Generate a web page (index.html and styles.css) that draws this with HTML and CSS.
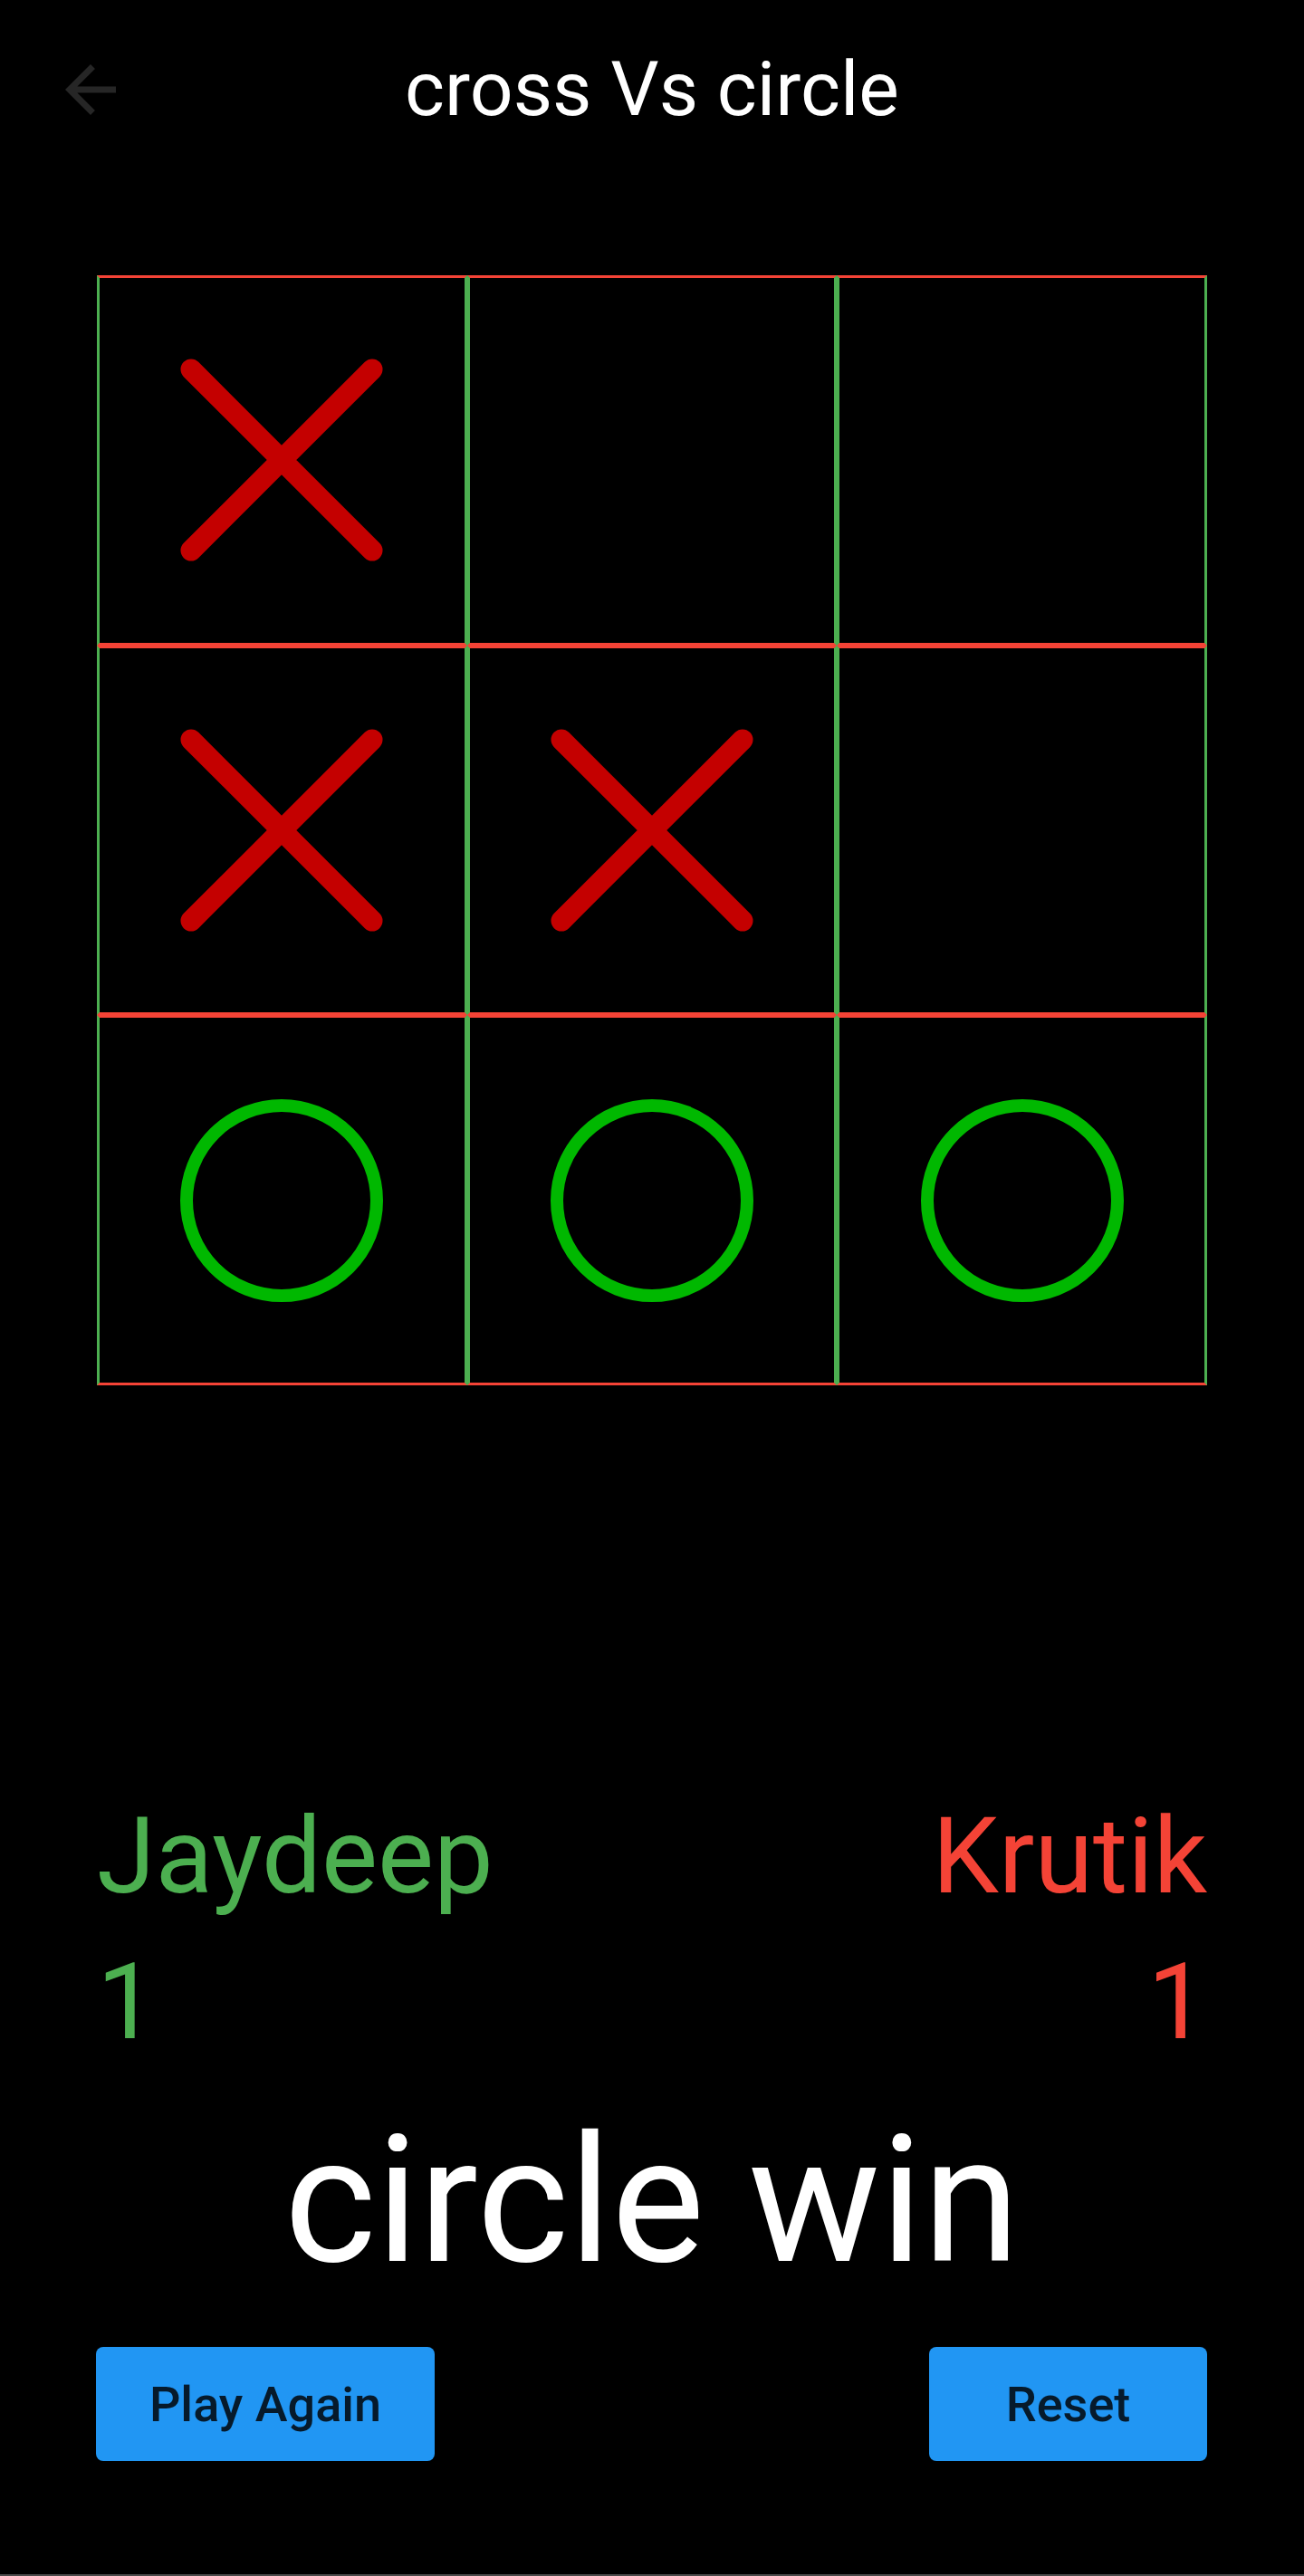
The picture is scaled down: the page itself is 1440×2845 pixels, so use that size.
FILE: index.html
```html
<!DOCTYPE html>
<html lang="en">
<head>
<meta charset="utf-8">
<title>cross Vs circle</title>
<link rel="stylesheet" href="styles.css">
</head>
<body>
<div class="page">
  <header class="appbar">
    <div class="back">
      <svg viewBox="0 0 24 24" width="84" height="84"><path d="M20 11H7.83l5.59-5.59L12 4l-8 8 8 8 1.41-1.41L7.83 13H20v-2z" fill="#262626"/></svg>
    </div>
    <h1 class="title">cross Vs circle</h1>
    <div></div>
  </header>

  <main class="content">
    <div class="board">
      <div class="cell"><svg class="mark" viewBox="0 0 224 224"><path d="M12 12L212 212M212 12L12 212" class="x"/></svg></div>
      <div class="cell"></div>
      <div class="cell"></div>
      <div class="cell"><svg class="mark" viewBox="0 0 224 224"><path d="M12 12L212 212M212 12L12 212" class="x"/></svg></div>
      <div class="cell"><svg class="mark" viewBox="0 0 224 224"><path d="M12 12L212 212M212 12L12 212" class="x"/></svg></div>
      <div class="cell"></div>
      <div class="cell"><svg class="mark" viewBox="0 0 224 224"><circle cx="112" cy="112" r="105" class="o"/></svg></div>
      <div class="cell"><svg class="mark" viewBox="0 0 224 224"><circle cx="112" cy="112" r="105" class="o"/></svg></div>
      <div class="cell"><svg class="mark" viewBox="0 0 224 224"><circle cx="112" cy="112" r="105" class="o"/></svg></div>
    </div>

    <div class="players">
      <div class="player green">
        <div class="name">Jaydeep</div>
        <div class="score">1</div>
      </div>
      <div class="player red right">
        <div class="name">Krutik</div>
        <div class="score">1</div>
      </div>
    </div>

    <div class="result">circle win</div>

    <div class="actions">
      <button class="btn btn-play">Play Again</button>
      <button class="btn btn-reset">Reset</button>
    </div>
  </main>
</div>
</body>
</html>
```

FILE: styles.css
```css
* { box-sizing: border-box; }

html, body {
  margin: 0;
  padding: 0;
  background: #000;
}

body {
  font-family: Roboto, "Liberation Sans", Arial, sans-serif;
  color: #fff;
}

.page {
  height: 2845px;
  border-bottom: 2px solid #4a4a4a;
  overflow: hidden;
}

.appbar {
  height: 196px;
  display: grid;
  grid-template-columns: 1fr auto 1fr;
  align-items: center;
  padding-top: 2px;
}

.back {
  padding-left: 58px;
  display: flex;
  align-items: center;
}

.back svg { display: block; }

.title {
  margin: 0;
  font-size: 84px;
  font-weight: 400;
  line-height: 1;
  color: #fff;
}

.content {
  padding: 0 107px;
}

.board {
  margin-top: 108px;
  display: grid;
  grid-template-columns: repeat(3, 1fr);
}

.cell {
  aspect-ratio: 1 / 1;
  border-top: 3px solid #f44336;
  border-bottom: 3px solid #f44336;
  border-left: 3px solid #4caf50;
  border-right: 3px solid #4caf50;
  display: flex;
  align-items: center;
  justify-content: center;
}

.mark {
  width: 224px;
  height: 224px;
  display: block;
}

.x {
  stroke: #c40000;
  stroke-width: 23;
  stroke-linecap: round;
  fill: none;
}

.o {
  stroke: #00b800;
  stroke-width: 14;
  fill: none;
}

.players {
  margin-top: 462px;
  display: flex;
  justify-content: space-between;
}

.player {
  display: flex;
  flex-direction: column;
  gap: 44px;
}

.player.right { align-items: flex-end; }

.name, .score {
  font-size: 117px;
  line-height: 1;
  font-weight: 400;
}

.green { color: #4caf50; }
.red { color: #f44336; }

.result {
  margin-top: 64px;
  text-align: center;
  font-size: 194px;
  line-height: 1;
  color: #fff;
}

.actions {
  margin-top: 64px;
  display: flex;
  justify-content: space-between;
}

.btn {
  height: 126px;
  border: none;
  border-radius: 8px;
  background: #2196f3;
  color: #061a2b;
  font-family: Roboto, "Liberation Sans", Arial, sans-serif;
  font-size: 54px;
  font-weight: 500;
  padding: 0;
  display: flex;
  align-items: center;
  justify-content: center;
}

.btn-play { width: 374px; margin-left: -1px; }
.btn-reset { width: 307px; }
```
